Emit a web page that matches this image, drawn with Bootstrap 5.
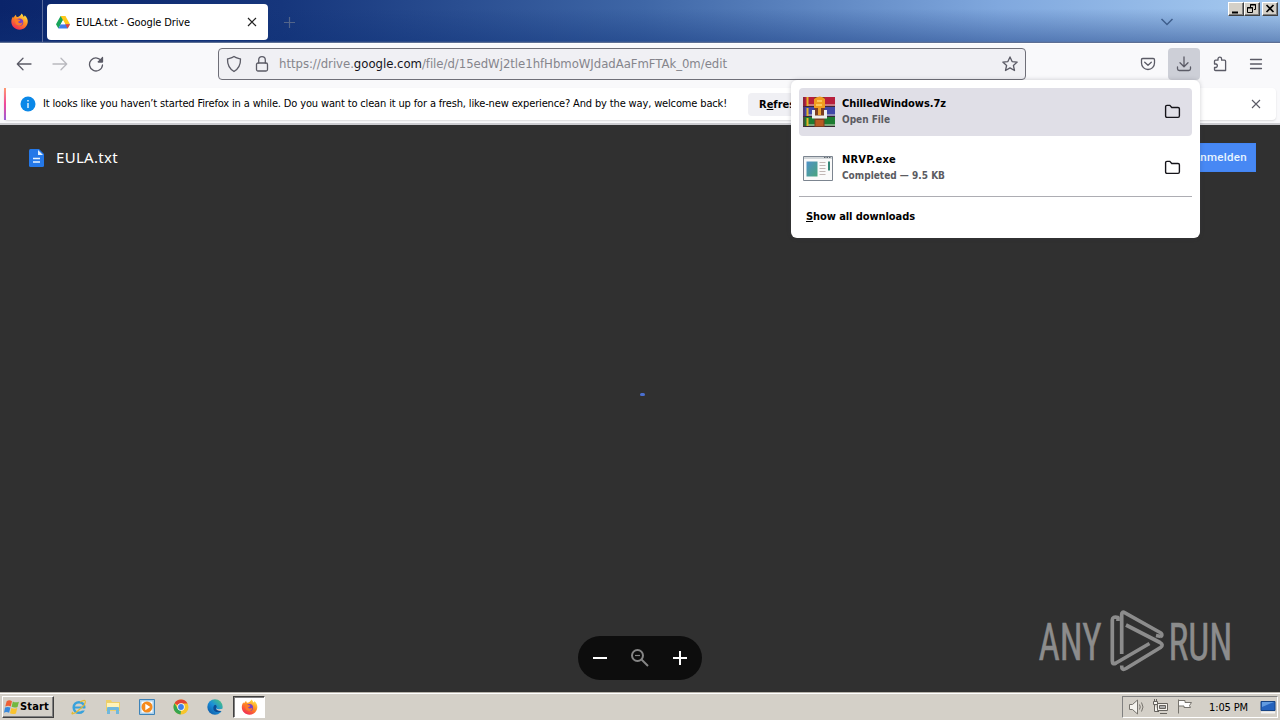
<!DOCTYPE html>
<html lang="en">
<head>
  <meta charset="UTF-8">
  <meta name="viewport" content="width=device-width, initial-scale=1.0">
  <title>EULA.txt - Google Drive</title>
  <!-- Bootstrap CSS -->
  <link href="https://cdn.jsdelivr.net/npm/bootstrap@5.3.0/dist/css/bootstrap.min.css" rel="stylesheet">
  <style>
    body {
      width: 1280px;
      height: 720px;
      font-family: "DejaVu Sans Condensed", "DejaVu Sans", sans-serif;
      font-stretch: condensed;
      font-size: 11px;
      line-height: 14px;
      color: #000;
      background: #303030;
    }
    svg { display: block; flex: none; }
    .fit { white-space: nowrap; flex: none; }

    /* Tab strip */
    .tab-strip {
      height: 43px;
      background:
        linear-gradient(180deg, rgba(15, 50, 120, 0) 20%, rgba(15, 50, 120, .42) 96%, #5d6f94 98%),
        linear-gradient(90deg, #0a246a 0%, #16367c 22%, #3e66a6 50%, #80a8de 78%, #a6caf0 100%);
    }
    .fx-view { width: 43px; border-right: 1px solid #5a6c9c; }
    .tab { width: 221px; height: 36px; margin: 4px 0 0 4px; padding: 0 10px 0 9px; background: #fff; border-radius: 4px; }
    .win-btn { width: 16px; height: 14px; background: #d4d0c8; border: 1px solid; border-color: #fff #404040 #404040 #fff; box-shadow: inset -1px -1px #808080; }

    /* Toolbar */
    .tool-bar { height: 44px; background: #f9f9fb; border-top: 1px solid #fff; padding-bottom: 3px; }
    .tool-bar svg, .url-box svg { stroke: #5b5b66; fill: none; stroke-width: 1.3; stroke-linecap: round; stroke-linejoin: round; }
    .url-box { width: 808px; height: 32px; background: #f0f0f4; border: 1px solid #6f6f78; border-radius: 4px; }
    .url-text { font-size: 13px; color: #85858c; }
    .url-text b { color: #15141a; font-weight: 400; }
    .dl-btn { width: 32px; height: 32px; background: #cdcfd7; border-radius: 4px; }

    /* Notification */
    .notice-wrap { height: 38px; background: #f9f9fb; border-bottom: 2px solid #ccccd0; padding: 1px 4px 4px; }
    .notice { height: 32px; background: #fff; border-radius: 4px; box-shadow: 0 1px 2px rgba(0, 0, 0, .13); }
    .notice-edge { width: 2px; height: 32px; background: linear-gradient(#ff9a70, #f0489a 50%, #9a5cd8); }
    .refresh { width: 90px; height: 23px; background: #f0f0f4; border-radius: 4px; padding: 5px 0 0 11px; font-weight: 700; }

    /* Page */
    .viewer { height: 567px; background: #303030; }
    .doc-name { font-family: "Noto Sans", sans-serif; font-size: 15px; line-height: 20px; color: #fff; }
    .sign-in { width: 96px; height: 29px; background: #4788f4; color: #e8f4ff; font: 500 11.5px/27px Roboto, sans-serif; letter-spacing: .3px; text-align: right; padding-right: 8px; border: 1px solid #4285f4; }
    .zoom-pill { left: 578px; top: 511px; width: 124px; height: 44px; border-radius: 22px; background: #0d0d0d; }
    .brand-mark { left: 1030px; top: 475px; }
    .load-dot { left: 640px; top: 268px; width: 5px; height: 3px; border-radius: 2px; background: #4a6fd0; }

    /* Downloads panel */
    .dl-panel { left: 791px; top: 80px; width: 409px; height: 158px; background: #fff; border-radius: 6px; padding: 8px; box-shadow: 0 0 4px rgba(60, 60, 70, .25); z-index: 5; font-weight: 700; }
    .dl-row { height: 48px; padding: 0 11px 0 3px; border-radius: 4px; }
    .dl-row.active { background: #e0dfe7; }
    .dl-row > svg { margin-bottom: 1px; }
    .dl-sub { color: #5b5b62; font-size: 10px; line-height: 14px; margin-top: 2px; }
    .dl-line { height: 1px; background: #adadb3; margin-top: 4px; }

    /* Taskbar */
    .task-bar { height: 28px; background: #d4d0c8; border-top: 1px solid #b8b4ac; box-shadow: inset 0 1px #fff; padding: 3px 2px 0; }
    .start-btn { width: 52px; height: 22px; border: 1px solid; border-color: #fff #404040 #404040 #fff; box-shadow: inset -1px -1px #808080; font-weight: 700; padding-left: 1px; }
    .task-on { width: 32px; height: 22px; background: #fff; border: 1px solid; border-color: #404040 #fff #fff #404040; box-shadow: inset 1px 1px #808080; }
    .tray { width: 156px; height: 22px; border: 1px solid; border-color: #808080 #fff #fff #808080; padding: 0 1px 0 5px; }
  </style>
</head>
<body class="overflow-hidden d-flex flex-column">
  <!-- Shared icons -->
  <svg width="0" height="0" class="position-absolute">
    <defs>
      <linearGradient id="fxg" x1=".8" y1="0" x2=".2" y2="1"><stop offset="0" stop-color="#fff04a"/><stop offset=".45" stop-color="#ff8a20"/><stop offset="1" stop-color="#f0205a"/></linearGradient>
      <linearGradient id="edg" x1="0" y1="1" x2="1" y2="0"><stop offset="0" stop-color="#0c4f9e"/><stop offset=".5" stop-color="#1a90d8"/><stop offset="1" stop-color="#55cc70"/></linearGradient>
      <symbol id="firefox" viewBox="0 0 16 16">
        <path d="M10 .5c1 1 1.600 2 1.800 3 .7-.2 1-.8 1-1.400C15 4 16 6.300 15.800 8.500 15.500 12.600 12.200 15.700 8 15.700S.3 12.500.3 8.300C.3 6 1 4.500 2 3.200c0 .6.2 1 .5 1.300C3 3.300 4 2.200 4.700 1.700c0 1 .4 1.800 1 2.100C7.500 3.700 9 2.500 10 .5z" fill="url(#fxg)"/>
        <circle cx="8" cy="8.600" r="3.500" fill="#7540c8"/>
        <path d="M4 6.200c2-.8 3 .1 4.800.3-.2 1.300-1.500 1.300-2.200 1.800.5 1.600 3 1.800 4.200.2C10.800 11 9 12.200 7.300 12 4.500 11.800 3.300 9 4 6.200z" fill="#ff7a28"/>
      </symbol>
      <symbol id="folder" viewBox="0 0 16 16">
        <path d="M1.500 12V3.500Q1.500 2.200 2.800 2.200H5.500L7.300 4.200H13.200Q14.500 4.200 14.500 5.500V12Q14.500 13.500 13.200 13.500H2.800Q1.500 13.500 1.500 12z" fill="none" stroke="#15141a" stroke-width="1.300"/>
      </symbol>
    </defs>
  </svg>

  <!-- Tab strip -->
  <div class="tab-strip d-flex">
    <div class="fx-view d-flex align-items-center justify-content-center pe-1"><svg width="17" height="17"><use href="#firefox"/></svg></div>
    <div class="tab d-flex align-items-center">
      <svg width="14" height="13" viewBox="0 0 14 13"><path d="M4.600 0H9.400L7 4.200 2.400 12.500 0 8.300z" fill="#18a45a"/><path d="M4.600 0H9.400L14 8.300H9.300z" fill="#ffc81a"/><path d="M2.400 12.500L4.700 8.300H14L11.600 12.500z" fill="#3f7cec"/><path d="M11.600 12.500L9.300 8.300H14z" fill="#ea4335"/><path d="M7 4.200L9.300 8.300H4.700z" fill="#fff"/></svg>
      <span class="fit" id="t-tab" style="margin:2px 0 0 6px">EULA.txt - Google Drive</span>
      <svg class="ms-auto" width="12" height="12" viewBox="0 0 12 12"><path d="M2 2l8 8M10 2l-8 8" stroke="#222" stroke-width="1.200"/></svg>
    </div>
    <svg class="ms-3" style="margin-top:16px" width="13" height="13"><path d="M5.500 1v11M0 6.500h11" stroke="#53658a" stroke-width="1.200"/></svg>
    <svg class="ms-auto" style="margin:17px 54px 0 0" width="14" height="10" viewBox="0 0 14 10"><path d="M1.500 2l5.500 5.500L12.500 2" fill="none" stroke="#3f5e8c" stroke-width="1.500"/></svg>
    <div class="d-flex" style="margin:2px 2px 0 0">
      <div class="win-btn"><svg width="14" height="12"><path d="M3 9.500h6" stroke="#000" stroke-width="2"/></svg></div>
      <div class="win-btn"><svg width="14" height="12" fill="none" stroke="#000"><path d="M5.500 4V1.500h5v5H9M5 2h6M2.500 4.500h5v5h-5zM2 5h6"/></svg></div>
      <div class="win-btn" style="margin-left:2px"><svg width="14" height="12"><path d="M3.500 2l7 7M10.500 2l-7 7" stroke="#000" stroke-width="1.700"/></svg></div>
    </div>
  </div>

  <!-- Navigation toolbar -->
  <div class="tool-bar d-flex align-items-center">
    <svg style="margin-left:16px" width="16" height="16"><path d="M1.500 8H15M7 2.300L1.300 8 7 13.700"/></svg>
    <svg style="margin-left:20px;opacity:.4" width="16" height="16"><path d="M1 8h13.500M9 2.300L14.700 8 9 13.700"/></svg>
    <svg style="margin-left:20px" width="16" height="16"><path d="M13.800 5.500A6.500 6.500 0 1 0 14.500 9M14.500 1.500v4.300h-4.300"/><path d="M14.300 2v3.800h-3.800z" fill="#5b5b66"/></svg>
    <div class="url-box d-flex align-items-center" style="margin-left:114px">
      <svg style="margin-left:7px" width="16" height="18" viewBox="0 0 16 18"><path d="M8 1.500C10 3 12 3.300 14.500 4c.2 6-1.500 9.500-6.500 12.500C3 13.500 1.300 10 1.500 4 4 3.300 6 3 8 1.500z"/></svg>
      <svg style="margin-left:12px" width="16" height="18" viewBox="0 0 16 18"><rect x="2.500" y="8" width="11" height="8" rx="1.500"/><path d="M4.700 8V5a3.300 3.300 0 0 1 6.600 0v3"/></svg>
      <span class="fit url-text" id="t-url" style="margin-left:9px">https://drive.<b>google.com</b>/file/d/15edWj2tle1hfHbmoWJdadAaFmFTAk_0m/edit</span>
      <svg class="ms-auto" style="margin-right:7px" width="16" height="16"><path d="M8 .9l2.100 4.700 5.100.5-3.800 3.400 1.100 5L8 11.900l-4.500 2.600 1.100-5L.8 6.100l5.100-.5z"/></svg>
    </div>
    <svg style="margin-left:114px" width="16" height="16"><path d="M2.800 2.500h10.400q1.300 0 1.300 1.300V7a6.500 6.500 0 0 1-13 0V3.800q0-1.300 1.300-1.300zM4.700 6.200L8 9.300l3.300-3.100"/></svg>
    <div class="dl-btn d-flex align-items-center justify-content-center" style="margin-left:12px"><svg width="16" height="16"><path d="M8 1v9.500M4 6.800l4 4 4-4M1.500 11v1.700q0 1.800 1.800 1.800h9.400q1.800 0 1.800-1.800V11"/></svg></div>
    <svg style="margin-left:12px" width="16" height="16"><path d="M2.500 8V5.200q0-1 1-1H6V3a1.800 1.800 0 0 1 3.600 0v1.200h3q1 0 1 1v9.300H3.500q-1 0-1-1v-2H4a1.800 1.800 0 0 0 0-3.500z"/></svg>
    <svg style="margin-left:20px" width="16" height="16"><path d="M2.500 3.500h11M2.500 8h11M2.500 12.500h11"/></svg>
  </div>

  <!-- Notification bar -->
  <div class="notice-wrap">
    <div class="notice d-flex align-items-center">
      <div class="notice-edge"></div>
      <svg style="margin-left:14px" width="16" height="16"><circle cx="8" cy="8" r="7.500" fill="#0b88e8"/><path d="M8 7v5M8 4v1.500" stroke="#fff" stroke-width="1.300"/></svg>
      <span class="fit" id="t-note" style="margin-left:7px">It looks like you haven’t started Firefox in a while. Do you want to clean it up for a fresh, like-new experience? And by the way, welcome back!</span>
      <div class="refresh fit" style="margin-left:21px">R<u>e</u>fresh</div>
      <svg class="ms-auto" style="margin-right:14px" width="12" height="12"><path d="M2 2l8 8M10 2l-8 8" stroke="#5b5b66" stroke-width="1.100"/></svg>
    </div>
  </div>

  <!-- Drive viewer -->
  <main class="viewer position-relative">
    <div class="d-flex align-items-center justify-content-between" style="padding:18px 24px 0 29px">
      <div class="d-flex align-items-center pb-1">
        <svg class="mt-1" width="15" height="18" viewBox="0 0 15 18"><path d="M1.500 0H10l5 5v11.500q0 1.500-1.500 1.500h-12Q0 18 0 16.500v-15Q0 0 1.500 0z" fill="#2478e8"/><path d="M9 1l5 5H9z" fill="#e0efff"/><path d="M4 9.500h7M4 13h7" stroke="#e8f3ff" stroke-width="1.600"/></svg>
        <span class="doc-name fit" id="t-doc" style="margin:2px 0 0 12px">EULA.txt</span>
      </div>
      <div class="sign-in">Anmelden</div>
    </div>
    <div class="load-dot position-absolute"></div>
    <div class="zoom-pill position-absolute d-flex align-items-center">
      <svg style="margin-left:15px" width="14" height="14"><path d="M0 7h14" stroke="#fff" stroke-width="2"/></svg>
      <svg style="margin-left:24px" width="18" height="18"><g fill="none" stroke="#858585" stroke-width="2"><circle cx="6.500" cy="6.500" r="5.500"/><path d="M10.500 10.500l6.500 6.500"/><path d="M4 6.500h5" stroke-width="1.200"/></g></svg>
      <svg style="margin-left:24px" width="14" height="14"><path d="M0 7h14M7 0v14" stroke="#fff" stroke-width="2"/></svg>
    </div>
    <svg class="brand-mark position-absolute" width="250" height="80" viewBox="1030 600 250 80">
      <g fill="#8c8c8c" stroke="#8c8c8c" stroke-width=".5" font-family="Roboto, sans-serif" font-size="51.500">
        <text x="1038.500" y="659.500" textLength="63" lengthAdjust="spacingAndGlyphs">ANY</text>
        <text x="1168.500" y="659.500" textLength="64" lengthAdjust="spacingAndGlyphs">RUN</text>
      </g>
      <g fill="none" stroke="#8c8c8c" stroke-width="3.700" stroke-linejoin="round">
        <path d="M1121.700 654V614.500Q1121.700 611 1125 612.800L1161 633Q1163 635 1160.500 636.800"/>
        <path d="M1118 621V617.500Q1112.300 616 1112.300 620V661Q1112.300 665 1116 663L1149.500 643.500"/>
        <path d="M1126 625L1160 642.500Q1164 645 1160.500 647.500L1126 668.500Q1121.500 671 1121.700 665.500"/>
        <path d="M1161 636.500L1156 635.500"/>
      </g>
    </svg>
  </main>

  <!-- Taskbar -->
  <footer class="task-bar d-flex">
    <div class="start-btn d-flex align-items-center">
      <svg width="16" height="16" viewBox="0 0 15 15"><path d="M2.500 2Q5 .5 7.500 2L6.300 7Q4 5.700 1.200 7z" fill="#ee6035"/><path d="M8.300 2.300Q11 3.800 14 2.500L12.700 7.500Q10 8.700 7.100 7.300z" fill="#72b840"/><path d="M1 8Q3.500 6.800 6 8L4.800 13Q2 11.500 0 13z" fill="#3889dc"/><path d="M6.900 8.400Q9.700 9.700 12.400 8.500L11.200 13.500Q8 14.700 5.600 13.300z" fill="#fac32d"/></svg>
      <span class="fit" id="t-start">Start</span>
    </div>
    <div class="d-flex" style="margin:3px 0 0 17px;gap:18px">
      <svg width="16" height="16"><g fill="none" stroke="#39a2dc"><circle cx="8" cy="8.500" r="5.300" stroke-width="2.500"/><path d="M4 8.500h8.500" stroke-width="2"/></g><path d="M11 10.500h5" stroke="#d4d0c8" stroke-width="2"/><path d="M2 13Q-1 16.500 5 13.500L13 6.500Q17-1.500 9 3" fill="none" stroke="#e4ba30" stroke-width="1.200"/></svg>
      <svg width="16" height="16"><path d="M1 1h5l1 2h8v9H1z" fill="#edcf69"/><path d="M2 4h12v5H2z" fill="#fff3b8"/><path d="M2 15V9q0-1 1-1h10q1 0 1 1v6h-3v-4H5v4z" fill="#70b8dc"/></svg>
      <svg width="16" height="16"><path d="M.5.500h15v15H.5z" fill="#aacfea" stroke="#3d83b8"/><path d="M2.500 2.500h11v11h-11z" fill="#fff"/><circle cx="8" cy="8" r="5.500" fill="#f58a1c"/><path d="M6.300 4.800l5 3.200-5 3.200z" fill="#fff"/></svg>
      <svg width="16" height="16"><circle cx="8" cy="8" r="7.500" fill="#f7c52b"/><path d="M8 8L1.500 4.200A7.500 7.500 0 0 1 14.500 4.500H8z" fill="#e24436"/><path d="M1.500 4.200L4.800 9.700 8 11.500 7.500 15.500A7.500 7.500 0 0 1 1.500 4.200z" fill="#35a550"/><circle cx="8" cy="8" r="3.700" fill="#fff"/><circle cx="8" cy="8" r="2.900" fill="#4080e8"/></svg>
      <svg width="16" height="16"><circle cx="8" cy="8" r="7.700" fill="url(#edg)"/><path d="M6.300 8.500Q6 13 11.500 13.300 13.500 13 14.500 12L15.500 10Q11 12 9 9.500 10.500 7 8.500 5.800 6.500 6 6.300 8.500z" fill="#0d4c94"/><path d="M9 9.300Q10.500 11 16 9.800V12h-2Q9.500 12 9 9.300z" fill="#d4d0c8"/></svg>
    </div>
    <div class="task-on d-flex align-items-center justify-content-center" style="margin-left:10px"><svg width="17" height="16"><use href="#firefox"/></svg></div>
    <div class="tray d-flex align-items-center ms-auto">
      <svg width="18" height="18" fill="#f5f3ee" stroke="#77746e"><path d="M1.500 6.500h3L9.500 2v14l-5-4.500h-3z"/><path d="M11.500 6.500q1.500 2.500 0 5M13.500 4.500q3 4.500 0 9" fill="none"/></svg>
      <svg style="margin-left:6px" width="18" height="18" fill="#f5f3ee" stroke="#66635e"><path d="M5.500 5.500h10v7h-10zM8 15.500h7M2.500 7v6.500H7"/><path d="M7.500 7.500h6v3h-6z" fill="#aaa"/><path d="M1.500 3.500h4v3h-4zM2.500 1v3M4.500 1v3"/></svg>
      <svg style="margin-left:6px" width="18" height="18" fill="#fff" stroke="#77746e"><path d="M2.500 1.500v14M2.500 2.500H9v2h6.500l-2 3 1 2H8v-1.500H2.500"/></svg>
      <span class="fit" id="t-clock" style="margin:1px 0 0 15px">1:05 PM</span>
      <svg class="ms-auto" width="16" height="16"><path d="M1 2.500h14v9H1z" fill="#2563bd" stroke="#174585"/><path d="M2 3h12l-12 5z" fill="#619be0"/><path d="M1 13.500h14" stroke="#f2f2f2" stroke-width="2"/></svg>
    </div>
  </footer>

  <!-- Downloads panel -->
  <div class="dl-panel position-absolute">
    <div class="dl-row active d-flex align-items-center">
      <svg width="34" height="32" viewBox="0 0 34 32">
        <path d="M1 1h32v10H1z" fill="#b81f3c"/><path d="M1 11h32v10H1z" fill="#4148a8"/><path d="M1 21h32v10H1z" fill="#1d7c31"/>
        <path d="M6 9h27M6 19h27M6 29h27" stroke="#d8d2c8"/><path d="M1 10.500h32M1 20.500h32M1 30.500h32" stroke="#382733"/>
        <path d="M5.500 1v9M5.500 12v8M5.500 22v8" stroke="#e8b428" stroke-width="2"/><path d="M2 1v30" stroke="#652b40"/>
        <path d="M12.500 1h10v30h-10z" fill="#7a3d22"/><path d="M12 3q6-5 11 0v9H12z" fill="#f09d20"/><path d="M15 5h5M14 9h6" stroke="#ffd36a" stroke-width="1.500"/>
        <path d="M11.500 14v7h12v-7" fill="none" stroke="#eee" stroke-width="3"/><path d="M16 12h3v7h-3z" fill="#e8a030"/><path d="M13.500 24h8v6h-8z" fill="#b95b23"/>
      </svg>
      <div style="margin-left:6px"><div class="fit"><span id="t-d1">ChilledWindows.7z</span></div><div class="dl-sub fit"><span id="t-d2">Open File</span></div></div>
      <svg class="ms-auto" width="17" height="17"><use href="#folder"/></svg>
    </div>
    <div class="dl-row d-flex align-items-center mt-2">
      <svg width="34" height="32" viewBox="0 0 34 32">
        <defs><linearGradient id="exe" x2="1" y2="1"><stop stop-color="#4f91c8"/><stop offset="1" stop-color="#49a57d"/></linearGradient></defs>
        <path d="M1.500 4.500h29v24h-29z" fill="#fafafa" stroke="#7c8590"/><path d="M2 6h28" stroke="#d3d7da" stroke-width="2"/><path d="M22 5.500h7" stroke="#606870" stroke-dasharray="1.500 1"/>
        <path d="M4.500 9.500h11v15h-11z" fill="url(#exe)"/><path d="M17.500 10.500h6M17.500 13.500h6M17.500 16.500h6M17.500 19.500h6M17.500 22.500h6" stroke="#c1b7b5"/><path d="M27 9.500v9" stroke="#348878" stroke-width="2"/>
      </svg>
      <div style="margin-left:6px"><div class="fit"><span id="t-d3">NRVP.exe</span></div><div class="dl-sub fit"><span id="t-d4">Completed — 9.5 KB</span></div></div>
      <svg class="ms-auto" width="17" height="17"><use href="#folder"/></svg>
    </div>
    <div class="dl-line"></div>
    <div class="fit" style="padding:13px 0 0 7px"><span id="t-d5"><u>S</u>how all downloads</span></div>
  </div>

  <!-- Bootstrap JS -->
  <script src="https://cdn.jsdelivr.net/npm/bootstrap@5.3.0/dist/js/bootstrap.bundle.min.js"></script>
  <script>
    // Label widths in px, spread over the letters as tracking
    const widths = {
      't-tab': 114, 't-url': 448, 't-note': 684, 't-doc': 62, 't-start': 29, 't-clock': 39,
      't-d1': 104, 't-d2': 48, 't-d3': 54, 't-d4': 103, 't-d5': 109
    };
    Object.keys(widths).forEach(function (id) {
      const el = document.getElementById(id);
      el.style.display = 'inline-block';
      const extra = widths[id] - el.getBoundingClientRect().width;
      el.style.letterSpacing = (extra / el.textContent.length) + 'px';
    });
  </script>
</body>
</html>
